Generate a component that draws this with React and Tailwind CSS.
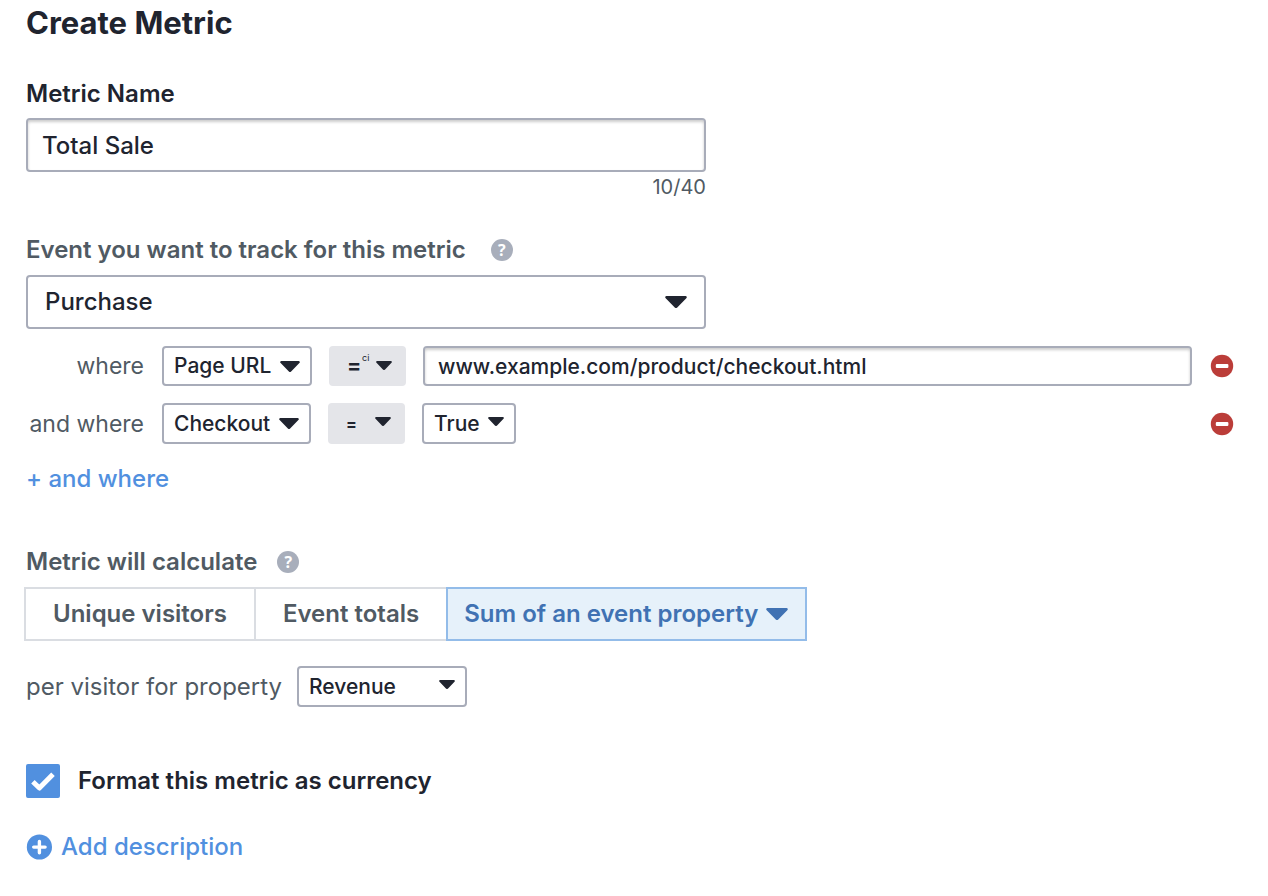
import { useState } from 'react';
import { clsx } from 'clsx';

const MAX_NAME_LENGTH = 40;

const CARET_SIZES = {
  sm: 'h-[9px] w-4',
  md: 'h-[11px] w-5',
  lg: 'h-3 w-[22px]',
};

function Caret({ size = 'sm', className }) {
  return (
    <svg viewBox="0 0 22 12" preserveAspectRatio="none" className={clsx('shrink-0', CARET_SIZES[size], className)} aria-hidden="true">
      <path
        d="M1.6 0h18.8a1.3 1.3 0 0 1 .9 2.3l-8.8 9a2.1 2.1 0 0 1-3 0l-8.8-9A1.3 1.3 0 0 1 1.6 0z"
        fill="currentColor"
      />
    </svg>
  );
}

function HelpButton({ label }) {
  return (
    <button
      type="button"
      aria-label={label}
      className="flex size-[22px] items-center justify-center rounded-full bg-[#a8aebb] font-['Open_Sans',sans-serif] text-base leading-none font-bold text-white"
    >
      ?
    </button>
  );
}

/**
 * Native select with the caret laid over its right side
 */
function Select({ label, value, options, onChange, className, caret = 'sm', caretClass, id, children }) {
  return (
    <div className="relative shrink-0">
      <select
        id={id}
        aria-label={label}
        value={value}
        onChange={(e) => onChange(e.target.value)}
        className={clsx('block appearance-none rounded-sm', className)}
      >
        {options.map((option) => (
          <option key={option} value={option}>{option}</option>
        ))}
      </select>
      {children}
      <Caret size={caret} className={clsx('pointer-events-none absolute', caretClass)} />
    </div>
  );
}

function RemoveButton({ label }) {
  return (
    <button type="button" aria-label={label} className="ml-auto shrink-0">
      <svg viewBox="0 0 24 24" className="block size-6" aria-hidden="true">
        <circle cx="12" cy="12" r="11.2" fill="#bb3d39" />
        <rect x="5.8" y="10" width="12.6" height="4" rx="1.1" fill="#fff" />
      </svg>
    </button>
  );
}

export default function App() {
  const [name, setName] = useState('Total Sale');
  const [event, setEvent] = useState('Purchase');
  const [property, setProperty] = useState('Page URL');
  const [url, setUrl] = useState('www.example.com/product/checkout.html');
  const [secondProperty, setSecondProperty] = useState('Checkout');
  const [operators, setOperators] = useState(['=', '=']);
  const [flag, setFlag] = useState('True');
  const [calculation, setCalculation] = useState('sum');
  const [sumProperty, setSumProperty] = useState('Revenue');
  const [isCurrency, setIsCurrency] = useState(true);

  return (
    <form
      onSubmit={(e) => e.preventDefault()}
      className="bg-white pr-[34px] pb-8 pl-[26px] font-[Inter,sans-serif] text-2xl leading-8 text-[#20242f]"
    >
      <h1 className="pt-[3px] text-[31px] leading-10 font-bold">Create Metric</h1>

      {/* Name */}
      <div className="mt-[35px] max-w-[680px]">
        <label htmlFor="metric-name" className="block font-semibold">Metric Name</label>
        <input
          id="metric-name"
          type="text"
          maxLength={MAX_NAME_LENGTH}
          value={name}
          onChange={(e) => setName(e.target.value)}
          className="mt-2 block h-[54px] w-full rounded-sm border-2 border-[#a8acb9] px-3.5 font-medium shadow-[inset_0_2px_3px_rgba(0,0,0,0.2)]"
        />
        <p className="mt-[3px] text-right text-xl leading-6 text-[#505a63]">{name.length}/{MAX_NAME_LENGTH}</p>
      </div>

      {/* Event */}
      <div className="mt-[35px] max-w-[680px]">
        <div className="flex items-center gap-[25px]">
          <label htmlFor="metric-event" className="font-semibold text-[#505a63]">
            Event you want to track for this metric
          </label>
          <HelpButton label="About events" />
        </div>
        <div className="mt-[9px]">
          <Select
            id="metric-event"
            value={event}
            onChange={setEvent}
            options={['Purchase', 'Sign up', 'Page view']}
            className="h-[54px] w-full border-2 border-[#a8acb9] pr-12 pl-[17px] font-medium"
            caret="lg"
            caretClass="top-[21px] right-[19px]"
          />
        </div>
      </div>

      {/* Conditions */}
      <div className="mt-[17px] flex flex-col gap-[17px] text-[21px]">
        <div className="flex items-center">
          <span className="mr-[18px] w-[118px] shrink-0 text-right text-[23px] leading-8 whitespace-nowrap text-[#505a63]">where</span>
          <Select
            label="First property"
            value={property}
            onChange={setProperty}
            options={['Page URL', 'Checkout', 'Revenue']}
            className="h-10 w-[150px] border-2 border-[#a8acb9] px-2.5 font-medium"
            caret="md"
            caretClass="top-[15px] right-3"
          />
          <div className="mx-[17px]">
            <Select
              label="First operator, case insensitive"
              value={operators[0]}
              onChange={(value) => setOperators([value, operators[1]])}
              options={['=', '≠']}
              className="h-10 w-[77px] bg-[#e4e5e9] pl-[18px] font-bold"
              caretClass="top-[15px] right-3.5"
            >
              <span className="pointer-events-none absolute top-1.5 left-[33px] text-[9px] leading-3" aria-hidden="true">ci</span>
            </Select>
          </div>
          <input
            type="text"
            aria-label="Page URL value"
            value={url}
            onChange={(e) => setUrl(e.target.value)}
            className="mr-[18px] h-10 min-w-0 flex-1 rounded-sm border-2 border-[#a8acb9] px-[13px] font-medium shadow-[inset_0_2px_3px_rgba(0,0,0,0.2)]"
          />
          <RemoveButton label="Remove first condition" />
        </div>

        <div className="flex items-center">
          <span className="mr-[18px] w-[118px] shrink-0 text-right text-[23px] leading-8 whitespace-nowrap text-[#505a63]">and where</span>
          <Select
            label="Second property"
            value={secondProperty}
            onChange={setSecondProperty}
            options={['Checkout', 'Page URL', 'Revenue']}
            className="h-[41px] w-[149px] border-2 border-[#a8acb9] px-2.5 font-medium"
            caret="md"
            caretClass="top-[15px] right-3"
          />
          <div className="mx-[17px]">
            <Select
              label="Second operator"
              value={operators[1]}
              onChange={(value) => setOperators([operators[0], value])}
              options={['=', '≠']}
              className="h-[41px] w-[77px] bg-[#e4e5e9] pl-[18px] text-base font-bold"
              caretClass="top-3.5 right-3.5"
            />
          </div>
          <Select
            label="Checkout value"
            value={flag}
            onChange={setFlag}
            options={['True', 'False']}
            className="h-[41px] w-[94px] border-2 border-[#a8acb9] px-2.5 font-medium"
            caretClass="top-3.5 right-3"
          />
          <RemoveButton label="Remove second condition" />
        </div>
      </div>
      <button type="button" className="mt-[19px] block font-medium text-[#5190df]">+ and where</button>

      {/* Calculation */}
      <div className="mt-[51px] flex items-center gap-5">
        <h2 className="font-semibold text-[#505a63]">Metric will calculate</h2>
        <HelpButton label="About calculation" />
      </div>
      <div className="mt-[9px] -ml-0.5 flex font-semibold text-[#505a63]">
        <button
          type="button"
          aria-pressed={calculation === 'unique'}
          onClick={() => setCalculation('unique')}
          className="h-[54px] border-2 border-[#dadde2] px-[27px]"
        >
          Unique visitors
        </button>
        <button
          type="button"
          aria-pressed={calculation === 'totals'}
          onClick={() => setCalculation('totals')}
          className="h-[54px] border-y-2 border-[#dadde2] px-[27px]"
        >
          Event totals
        </button>
        <button
          type="button"
          aria-pressed={calculation === 'sum'}
          aria-haspopup="menu"
          onClick={() => setCalculation('sum')}
          className="flex h-[54px] items-center gap-2 border-2 border-[#93bce9] bg-[#e6f1fa] pr-[17px] pl-4 text-[#4072b3]"
        >
          Sum of an event property
          <Caret size="lg" />
        </button>
      </div>

      <div className="mt-[25px] flex items-center gap-[15px]">
        <label htmlFor="sum-property" className="text-[#505a63]">per visitor for property</label>
        <Select
          id="sum-property"
          value={sumProperty}
          onChange={setSumProperty}
          options={['Revenue', 'Quantity']}
          className="h-[41px] w-[170px] border-2 border-[#a8acb9] px-2.5 text-[21px] font-medium"
          caretClass="top-3.5 right-3"
        />
      </div>

      {/* Currency */}
      <label className="mt-[57px] flex items-center gap-[18px] font-semibold">
        <span className="relative size-[34px] shrink-0">
          <input
            type="checkbox"
            checked={isCurrency}
            onChange={(e) => setIsCurrency(e.target.checked)}
            className="block size-[34px] appearance-none rounded-xs border-2 border-[#a8acb9] checked:border-[#5190df] checked:bg-[#5190df]"
          />
          {isCurrency && (
            <svg viewBox="0 0 34 34" className="pointer-events-none absolute inset-0 size-[34px]" aria-hidden="true">
              <path d="M6.9 17.8l6.5 6.2L27 10.3" fill="none" stroke="#fff" strokeWidth="5" strokeLinejoin="round" />
            </svg>
          )}
        </span>
        Format this metric as currency
      </label>

      <button type="button" className="mt-[33px] flex items-center gap-[9px] font-medium text-[#5190df]">
        <svg viewBox="0 0 26 26" className="size-[26px]" aria-hidden="true">
          <circle cx="13.4" cy="13" r="12.6" fill="currentColor" />
          <path d="M13.4 7.4v11.4M7.7 13.1h11.4" stroke="#fff" strokeWidth="3.4" strokeLinecap="round" />
        </svg>
        Add description
      </button>
    </form>
  );
}
